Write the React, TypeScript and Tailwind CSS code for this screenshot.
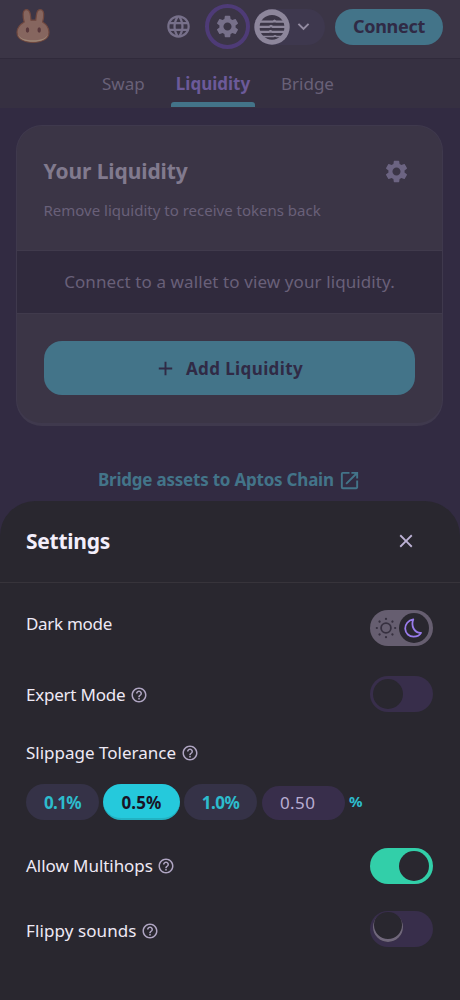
import React from "react";
import {
  MdAdd,
  MdClose,
  MdHelpOutline,
  MdKeyboardArrowDown,
  MdLanguage,
  MdOpenInNew,
  MdSettings,
} from "react-icons/md";

function BunnyLogo() {
  return (
    <svg width="34" height="36" viewBox="0 0 34 36" fill="none">
      <path
        d="M8.200 14 C6.800 9 6 2 10.200 1.600 C14.200 1.200 14.600 7 15 12.200 H19.800 C20.300 7 20.600 1.200 24.600 1.600 C28.800 2 28 9 26.600 14 C30.500 16.500 33 20 33 24.300 C33 31 26 34.300 17 34.300 C8 34.300 1 31 1 24.300 C1 20 4 16.500 8.200 14Z"
        fill="#86665f"
        stroke="#70483f"
        strokeWidth="1.200"
      />
      <path d="M1.800 26 C4 31 10 32.300 17 32.300 C24 32.300 30 31 32.200 26 C31.500 31 25 33.800 17 33.800 C9 33.800 2.500 31 1.800 26Z" fill="#9d8676" />
      <ellipse cx="11.500" cy="22" rx="1.700" ry="2.700" fill="#59383c" />
      <ellipse cx="23.200" cy="22" rx="1.700" ry="2.700" fill="#59383c" />
    </svg>
  );
}

function AptosLogo() {
  return (
    <svg className="size-[36px] shrink-0" viewBox="0 0 36 36" fill="none">
      <circle cx="18" cy="18" r="17.700" fill="#8d869b" />
      <circle cx="18" cy="18.300" r="12.400" fill="#3b3546" />
      <g stroke="#8d869b" strokeWidth="2.200" strokeLinejoin="round">
        <path d="M5 12.600 H19 L20.500 11.700 L22 12.600 H31" />
        <path d="M5 17.800 H15.500 L17 16.900 L18.500 17.800 H31" />
        <path d="M5 22.900 H15 L16.500 22 L18 22.900 H31" />
        <path d="M5 27.500 H19.500 L21 26.800 L22.500 27.500 H31" strokeWidth="1.700" />
      </g>
    </svg>
  );
}

function Header() {
  return (
    <header className="flex h-[59px] items-start border-b border-[#302a3b] bg-[#3b3546] pl-4 pr-[17px]">
      <div className="mt-2">
        <BunnyLogo />
      </div>
      <div className="ml-auto flex h-[53px] items-center">
        <MdLanguage className="size-[27px] text-[#77708a]" />
        <div className="ml-[13px] flex size-[45px] items-center justify-center rounded-full border-4 border-[#4e3b77]">
          <MdSettings className="size-[27px] text-[#77708a]" />
        </div>
        <div className="ml-[4px] flex h-9 w-[71px] items-center rounded-full bg-[#3e384e]">
          <AptosLogo />
          <MdKeyboardArrowDown className="ml-[2px] size-[23px] text-[#938ba2]" />
        </div>
        <button className="ml-[10px] h-9 w-[108px] rounded-[18px] bg-[#437489] text-[18px] font-bold tracking-[-0.300px] text-[#302a45]">
          Connect
        </button>
      </div>
    </header>
  );
}

function Nav() {
  return (
    <nav className="flex h-[49px] items-start bg-[#363041] pl-[102px] text-[17px] leading-[50px] text-[#696178]">
      <span className="w-[69px]">Swap</span>
      <span className="flex w-[84px] flex-col items-center font-bold text-[#6c5a99]">
        <span className="h-[43px]">Liquidity</span>
        <span className="h-[5px] w-[84px] rounded-t-[3px] bg-[#437489]" />
      </span>
      <span className="ml-[26px]">Bridge</span>
    </nav>
  );
}

function LiquidityCard() {
  return (
    <section className="mx-4 mt-[17px] h-[301px] w-[427px] overflow-hidden rounded-[26px] border border-b-[3px] border-[#3f394d] bg-[#3b3546]">
      <div className="flex h-[124px] justify-between pl-[26.500px] pr-[32px]">
        <div>
          <h1 className="mt-[29px] text-[21px] leading-8 font-bold tracking-[-0.100px] text-[#817a8e]">Your Liquidity</h1>
          <p className="mt-[11px] text-[15px] leading-6 text-[#696079]">Remove liquidity to receive tokens back</p>
        </div>
        <MdSettings className="mt-[32px] size-[27px] text-[#6c6482]" />
      </div>
      <div className="flex h-[64px] items-center justify-center border-y border-[#403a4c] bg-[#302a3d] text-[17px] tracking-[0.100px] text-[#696079]">
        Connect to a wallet to view your liquidity.
      </div>
      <button className="mx-[27px] mt-[27px] flex h-[54px] w-[371px] items-center justify-center gap-[9px] rounded-[18px] bg-[#437489] pr-[2px] text-[17px] font-bold tracking-[0.400px] text-[#302a45]">
        <MdAdd className="size-[23px]" />
        <span className="mt-[2px]">Add Liquidity</span>
      </button>
    </section>
  );
}

function Help() {
  return <MdHelpOutline className="size-[18px] shrink-0 text-[#afa5c2]" />;
}

function Toggle({ on = false, raised = false }: { on?: boolean; raised?: boolean }) {
  return (
    <div
      className={
        on
          ? "flex h-9 w-[63px] items-center justify-end rounded-full bg-[#32cfa9] pr-[4.500px]"
          : "flex h-9 w-[63px] items-center rounded-full bg-[#382e4b] pl-[3px]"
      }
    >
      <div
        className={
          raised
            ? "mb-[3px] size-[30px] rounded-full bg-[#29272f] shadow-[inset_0_-2px_0_1px_#70677b]"
            : "size-[30px] rounded-full bg-[#29272f]"
        }
      />
    </div>
  );
}

function ThemeToggle() {
  return (
    <div className="flex h-9 w-[63px] items-center rounded-full bg-[#665e70] pl-[5px]">
      <svg width="22" height="22" viewBox="0 0 22 22" fill="none">
        <circle cx="11" cy="11" r="4.900" stroke="#36303f" strokeWidth="1.800" />
        <path
          d="M11 1.800v.1M11 20.100v.1M1.800 11h.1M20.100 11h.1M4.500 4.500l.1.1M17.400 17.400l.1.1M4.500 17.500l.1-.1M17.400 4.600l.1-.1"
          stroke="#36303f"
          strokeWidth="2.200"
          strokeLinecap="round"
        />
      </svg>
      <div className="ml-[2px] flex size-[30px] items-center justify-center rounded-full bg-[#29272f]">
        <svg className="mr-[2px]" width="20" height="20" viewBox="0 0 20 20" fill="none">
          <path
            d="M10.300 1.300 C5.200 2.300 2 6.300 2.200 10.800 C2.500 15.500 6.200 18.600 10.500 18.600 C13.700 18.600 16.700 17.400 18 14.900 C15.200 15 12.300 13.500 10.700 10.800 C9.100 8 9.200 4.200 10.300 1.300Z"
            stroke="#997cec"
            strokeWidth="1.800"
            strokeLinejoin="round"
          />
        </svg>
      </div>
    </div>
  );
}

function SettingsSheet() {
  return (
    <section className="h-[499px] rounded-t-[35px] bg-[#29272f] text-[17px] leading-6 text-[#eee9f5]">
      <div className="flex h-[82px] items-center justify-between border-b border-[#37343b] pb-px pl-[26px] pr-[43px]">
        <h2 className="text-[21px] font-bold tracking-[-0.250px] text-[#f3eefb]">Settings</h2>
        <MdClose className="size-[22px] text-[#bdb2d6]" />
      </div>
      <div className="flex flex-col pl-[26px] pr-[27px]">
        <div className="mt-[27px] flex h-9 justify-between">
          <span className="mt-[2px] tracking-[-0.300px]">Dark mode</span>
          <ThemeToggle />
        </div>
        <div className="mt-[30px] flex h-9 items-center justify-between">
          <div className="mt-px flex items-center gap-[4px]">
            <span className="w-[100px] tracking-[-0.230px]">Expert Mode</span>
            <Help />
          </div>
          <Toggle />
        </div>
        <div className="mt-[29px] flex h-6 items-center gap-[4px]">
          <span className="w-[151px]">Slippage Tolerance</span>
          <Help />
        </div>
        <div className="mt-[19px] flex h-9 items-center font-bold text-[#2dbccd]">
          <button className="h-9 w-[73px] rounded-full bg-[#353247] pt-[2px] tracking-[-0.600px]">0.1%</button>
          <button className="ml-[4px] h-9 w-[77px] rounded-full border-b-2 border-[#22b2c2] bg-[#25c9dc] pt-[3px] tracking-[0.100px] text-[#191326]">0.5%</button>
          <button className="ml-[4px] h-9 w-[73px] rounded-full bg-[#353247] pt-[2px] tracking-[-0.500px]">1.0%</button>
          <div className="ml-[5px] mt-[2px] flex h-[34px] w-[83px] items-center rounded-full bg-[#382e4b] pl-[18px] font-normal tracking-[0.400px] text-[#b8add2]">
            0.50
          </div>
          <span className="ml-[4px] -mt-[3px] text-[15px]">%</span>
        </div>
        <div className="mt-[27.500px] flex h-9 items-center justify-between">
          <div className="flex items-center gap-[4px]">
            <span className="w-[127px] tracking-[-0.050px]">Allow Multihops</span>
            <Help />
          </div>
          <Toggle on />
        </div>
        <div className="mt-[27px] flex h-9 items-center justify-between">
          <div className="mt-[5px] flex items-center gap-[4px]">
            <span className="w-[110.500px] tracking-[0.100px]">Flippy sounds</span>
            <Help />
          </div>
          <Toggle raised />
        </div>
      </div>
    </section>
  );
}

export default function App() {
  return (
    <main className="flex h-[1000px] w-[460px] flex-col overflow-hidden bg-[#322b42] font-['Noto_Sans',sans-serif] whitespace-nowrap">
      <Header />
      <Nav />
      <LiquidityCard />
      <div className="mt-[42px] mb-[9px] flex h-6 items-center gap-[4px] pl-[98px] text-[17px] font-bold text-[#437489]">
        <span className="w-[236px] tracking-[-0.220px]">Bridge assets to Aptos Chain</span>
        <MdOpenInNew className="size-[23px]" />
      </div>
      <SettingsSheet />
    </main>
  );
}
